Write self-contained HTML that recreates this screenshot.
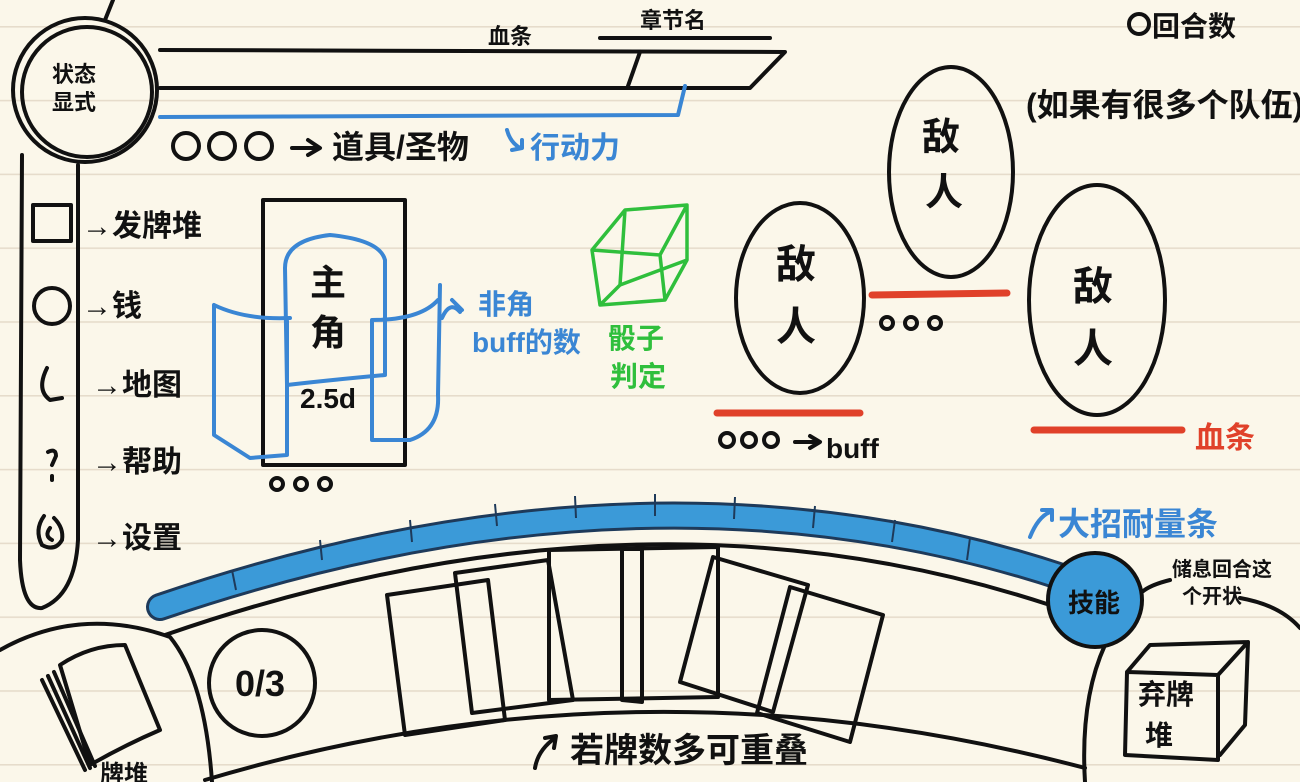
<!DOCTYPE html>
<html><head><meta charset="utf-8"><style>
html,body{margin:0;padding:0;width:1300px;height:782px;overflow:hidden;background:#fbf7ea}
svg{display:block}
text{font-family:"Liberation Sans","Noto Sans CJK SC",sans-serif;font-weight:bold}
</style></head><body>
<svg width="1300" height="782" viewBox="0 0 1300 782" xmlns="http://www.w3.org/2000/svg">
<defs>
<pattern id="ln" width="1300" height="73.8" patternUnits="userSpaceOnUse" y="26">
<rect x="0" y="0" width="1300" height="1.6" fill="#e6dccb"/>
</pattern>
</defs>
<rect width="1300" height="782" fill="#fbf7ea"/>
<rect width="1300" height="782" fill="url(#ln)"/>

<g fill="none" stroke="#111" stroke-width="4" stroke-linecap="round" stroke-linejoin="round">
<!-- status circle -->
<circle cx="85" cy="90" r="72"/>
<circle cx="87" cy="92" r="65"/>
<path d="M105,20 L113,0"/>
<!-- bars -->
<path d="M160,50 L785,52 L750,88 L160,88"/>
<path d="M640,52 L628,86"/>
<path d="M600,38 L770,38"/>
<!-- left capsule -->
<path d="M22,155 L20,560 Q22,610 42,608 Q75,595 78,540 L78,165"/>
<rect x="33" y="205" width="38" height="36"/>
<circle cx="52" cy="306" r="18"/>
<path d="M47,368 Q36,390 50,400 L62,398"/>
<path d="M48,452 Q56,448 56,456 L52,465 M52,476 L52,480"/>
<path d="M44,516 Q34,530 42,545 Q55,552 62,540 Q64,528 54,518 M50,528 Q44,536 52,540"/>
<!-- main character box -->
<rect x="263" y="200" width="142" height="265"/>
<circle cx="277" cy="484" r="6"/><circle cx="301" cy="484" r="6"/><circle cx="325" cy="484" r="6"/>
<!-- ooo top -->
<circle cx="186" cy="146" r="13"/><circle cx="222" cy="146" r="13"/><circle cx="259" cy="146" r="13"/>
<path d="M292,148 L318,148 M308,140 L320,148 L308,155"/>
<!-- enemies -->
<ellipse cx="800" cy="298" rx="64" ry="95"/>
<ellipse cx="951" cy="172" rx="62" ry="105"/>
<ellipse cx="1097" cy="300" rx="68" ry="115"/>
<circle cx="887" cy="323" r="6"/><circle cx="911" cy="323" r="6"/><circle cx="935" cy="323" r="6"/>
<circle cx="727" cy="440" r="7"/><circle cx="749" cy="440" r="7"/><circle cx="771" cy="440" r="7"/>
<path d="M795,442 L818,442 M810,436 L820,442 L810,448"/>
<circle cx="1139" cy="24" r="10"/>
<!-- arcs -->
<path d="M165,635 Q640,470 1050,605"/>
<path d="M205,780 Q640,650 1085,768"/>
<path d="M0,650 Q80,605 170,637 Q205,680 212,782"/>
<circle cx="262" cy="683" r="53"/>
<!-- deck icon -->
<path d="M60,665 Q90,645 125,645 L160,730 Q125,745 90,765 Z"/>
<path d="M42,680 L85,770 M48,676 L90,768 M54,672 L95,766"/>
<!-- right bottom -->
<path d="M1105,645 Q1080,700 1085,782"/>
<path d="M1240,598 Q1280,605 1300,628"/>
<path d="M1127,672 L1150,645 L1248,642 L1218,675 Z M1127,672 L1125,755 L1218,760 L1218,675 M1248,642 L1245,725 L1220,755"/>
<path d="M1142,592 Q1150,585 1170,580"/>
<!-- cards -->
<path d="M387,595 L488,580 L505,720 L405,735 Z"/>
<path d="M455,573 L548,560 L573,700 L472,713 Z"/>
<path d="M549,550 L718,547 L718,697 L549,700 Z"/>
<path d="M622,549 L642,549 L642,702 L622,700 Z"/>
<path d="M713,557 L808,585 L773,712 L680,682 Z"/>
<path d="M790,587 L883,615 L850,742 L757,713 Z"/>
<path d="M555,738 Q538,750 535,768 M545,738 L556,736 L554,748"/>
</g>

<!-- blue energy bar -->
<path d="M160,607 Q650,440 1065,578" fill="none" stroke="#1e3a5a" stroke-width="28" stroke-linecap="round"/>
<path d="M160,607 Q650,440 1065,578" fill="none" stroke="#3b9ad8" stroke-width="22" stroke-linecap="round"/>
<g stroke="#1e3a5a" stroke-width="2" fill="none">
<path d="M232,570 l4,20 M320,540 l2,20 M410,520 l2,22 M495,504 l2,22 M575,496 l1,22 M655,494 l0,22 M735,497 l-1,22 M815,506 l-2,22 M895,520 l-3,22 M970,538 l-3,22"/>
</g>
<circle cx="1095" cy="600" r="47" fill="#3b9ad8" stroke="#111" stroke-width="4"/>

<!-- blue elements -->
<g fill="none" stroke="#3a86d4" stroke-width="4" stroke-linecap="round" stroke-linejoin="round">
<path d="M160,117 L678,115 L685,86"/>
<path d="M285,268 Q285,240 330,235 Q380,240 385,260 L385,375 M285,268 L287,385 Q330,380 385,375"/>
<path d="M214,305 Q245,320 290,318 M214,305 L214,435 L250,458 L287,455 L287,318"/>
<path d="M372,320 L372,440 L410,440 Q440,430 438,395 L440,285 M372,320 Q420,320 438,300"/>
<path d="M442,318 Q450,300 460,312 M452,300 L462,310"/>
<path d="M507,130 Q510,142 520,148 M512,150 L522,148 L522,140"/>
<path d="M1030,537 Q1038,517 1050,512 M1042,510 L1052,510 L1052,520"/>
</g>
<!-- green dice -->
<g fill="none" stroke="#2fbf3c" stroke-width="3.5" stroke-linejoin="round">
<path d="M592,250 L625,210 L687,205 L687,260 L665,300 L600,305 Z M592,250 L660,255 L687,205 M660,255 L665,300 M625,210 L620,285 L600,305 M620,285 L687,260"/>
</g>

<!-- red lines -->
<g stroke="#e0412a" stroke-width="7" stroke-linecap="round">
<path d="M717,413 L860,413"/>
<path d="M872,295 L1007,293"/>
<path d="M1034,430 L1182,430"/>
</g>

<!-- text -->
<g fill="#111">
<text x="52" y="82" font-size="22">状态</text>
<text x="52" y="110" font-size="22">显式</text>
<text x="488" y="44" font-size="22">血条</text>
<text x="640" y="28" font-size="22">章节名</text>
<text x="1152" y="36" font-size="28">回合数</text>
<text x="1026" y="116" font-size="32">(如果有很多个队伍)</text>
<text x="332" y="158" font-size="32">道具/圣物</text>
<text x="82" y="236" font-size="30">→发牌堆</text>
<text x="82" y="316" font-size="30">→钱</text>
<text x="92" y="395" font-size="30">→地图</text>
<text x="92" y="472" font-size="30">→帮助</text>
<text x="92" y="548" font-size="30">→设置</text>
<text x="310" y="295" font-size="36">主</text>
<text x="310" y="345" font-size="36">角</text>
<text x="300" y="408" font-size="28">2.5d</text>
<text x="776" y="278" font-size="40">敌</text>
<text x="776" y="340" font-size="40">人</text>
<text x="922" y="150" font-size="38">敌</text>
<text x="925" y="205" font-size="38">人</text>
<text x="1073" y="300" font-size="40">敌</text>
<text x="1073" y="362" font-size="40">人</text>
<text x="826" y="458" font-size="28">buff</text>
<text x="235" y="696" font-size="36">0/3</text>
<text x="100" y="782" font-size="24">牌堆</text>
<text x="570" y="762" font-size="34">若牌数多可重叠</text>
<text x="1068" y="612" font-size="26">技能</text>
<text x="1172" y="576" font-size="20">储息回合这</text>
<text x="1182" y="603" font-size="20">个开状</text>
<text x="1138" y="704" font-size="28">弃牌</text>
<text x="1145" y="745" font-size="28">堆</text>
</g>
<g fill="#3a86d4">
<text x="530" y="158" font-size="30">行动力</text>
<text x="478" y="314" font-size="28">非角</text>
<text x="472" y="352" font-size="28">buff的数</text>
<text x="1058" y="535" font-size="32">大招耐量条</text>
</g>
<g fill="#2fbf3c">
<text x="608" y="348" font-size="28">骰子</text>
<text x="610" y="386" font-size="28">判定</text>
</g>
<text x="1195" y="448" font-size="30" fill="#e0412a">血条</text>
</svg>
</body></html>
